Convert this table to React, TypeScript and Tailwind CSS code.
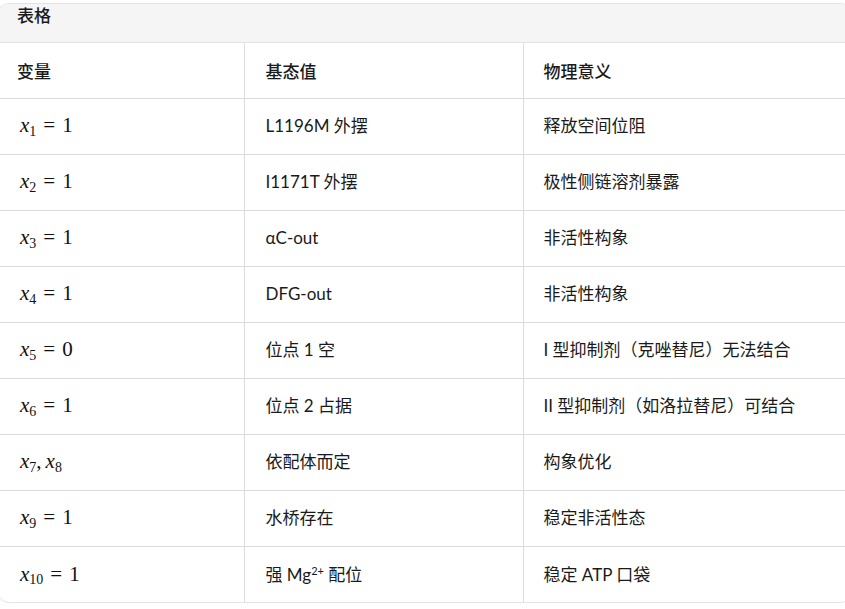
const rows: { sub: string; val?: string; base: React.ReactNode; mean: string }[] = [
  { sub: "1", val: "1", base: "L1196M 外摆", mean: "释放空间位阻" },
  { sub: "2", val: "1", base: "I1171T 外摆", mean: "极性侧链溶剂暴露" },
  { sub: "3", val: "1", base: "αC-out", mean: "非活性构象" },
  { sub: "4", val: "1", base: "DFG-out", mean: "非活性构象" },
  { sub: "5", val: "0", base: "位点 1 空", mean: "I 型抑制剂（克唑替尼）无法结合" },
  { sub: "6", val: "1", base: "位点 2 占据", mean: "II 型抑制剂（如洛拉替尼）可结合" },
  { sub: "7", base: "依配体而定", mean: "构象优化" },
  { sub: "9", val: "1", base: "水桥存在", mean: "稳定非活性态" },
  {
    sub: "10",
    val: "1",
    base: (
      <>
        强 Mg<sup className="text-[11px]">2+</sup> 配位
      </>
    ),
    mean: "稳定 ATP 口袋",
  },
];

function MathCell({ sub, val }: { sub: string; val?: string }) {
  return (
    <span className="font-['Liberation_Serif',serif] text-[21px] text-[#111] whitespace-nowrap">
      <i>x</i>
      <sub className="text-[14px]">{sub}</sub>
      {val ? (
        <>
          <span className="mx-[7px]">=</span>
          {val}
        </>
      ) : (
        <>
          ,<span className="ml-[4px]"><i>x</i><sub className="text-[14px]">8</sub></span>
        </>
      )}
    </span>
  );
}

export default function App() {
  return (
    <div className="w-[845px] h-[609px] overflow-hidden bg-white font-['Lato','Noto_Sans_CJK_SC',sans-serif] text-[17px] text-[#1a1a1a]">
      <div className="mt-[3px] -ml-[3px] w-[855px] rounded-[12px] border border-[#e3e3e3] overflow-hidden">
        <div className="h-[39px] bg-[#f5f5f5] border-b border-[#e3e3e3] pl-[19px] font-medium font-['Noto_Sans_CJK_SC',sans-serif] text-[17px] leading-[22px]">
          表格
        </div>
        <table className="w-full border-collapse">
          <thead>
            <tr className="h-[55px] border-b border-[#dcdcdc] font-['Noto_Sans_CJK_SC',sans-serif] text-[17px]">
              <th className="w-[246px] text-left font-medium pl-[19px] border-r border-[#dcdcdc]">变量</th>
              <th className="w-[279px] text-left font-medium pl-[21px] border-r border-[#dcdcdc]">基态值</th>
              <th className="text-left font-medium pl-[20px]">物理意义</th>
            </tr>
          </thead>
          <tbody>
            {rows.map((r, i) => (
              <tr key={i} className="h-[56px] border-b border-[#dcdcdc] last:border-b-0">
                <td className="pl-[22px] border-r border-[#dcdcdc]">
                  <MathCell sub={r.sub} val={r.val} />
                </td>
                <td className="pl-[21px] border-r border-[#dcdcdc]">{r.base}</td>
                <td className="pl-[20px]">{r.mean}</td>
              </tr>
            ))}
          </tbody>
        </table>
      </div>
    </div>
  );
}
